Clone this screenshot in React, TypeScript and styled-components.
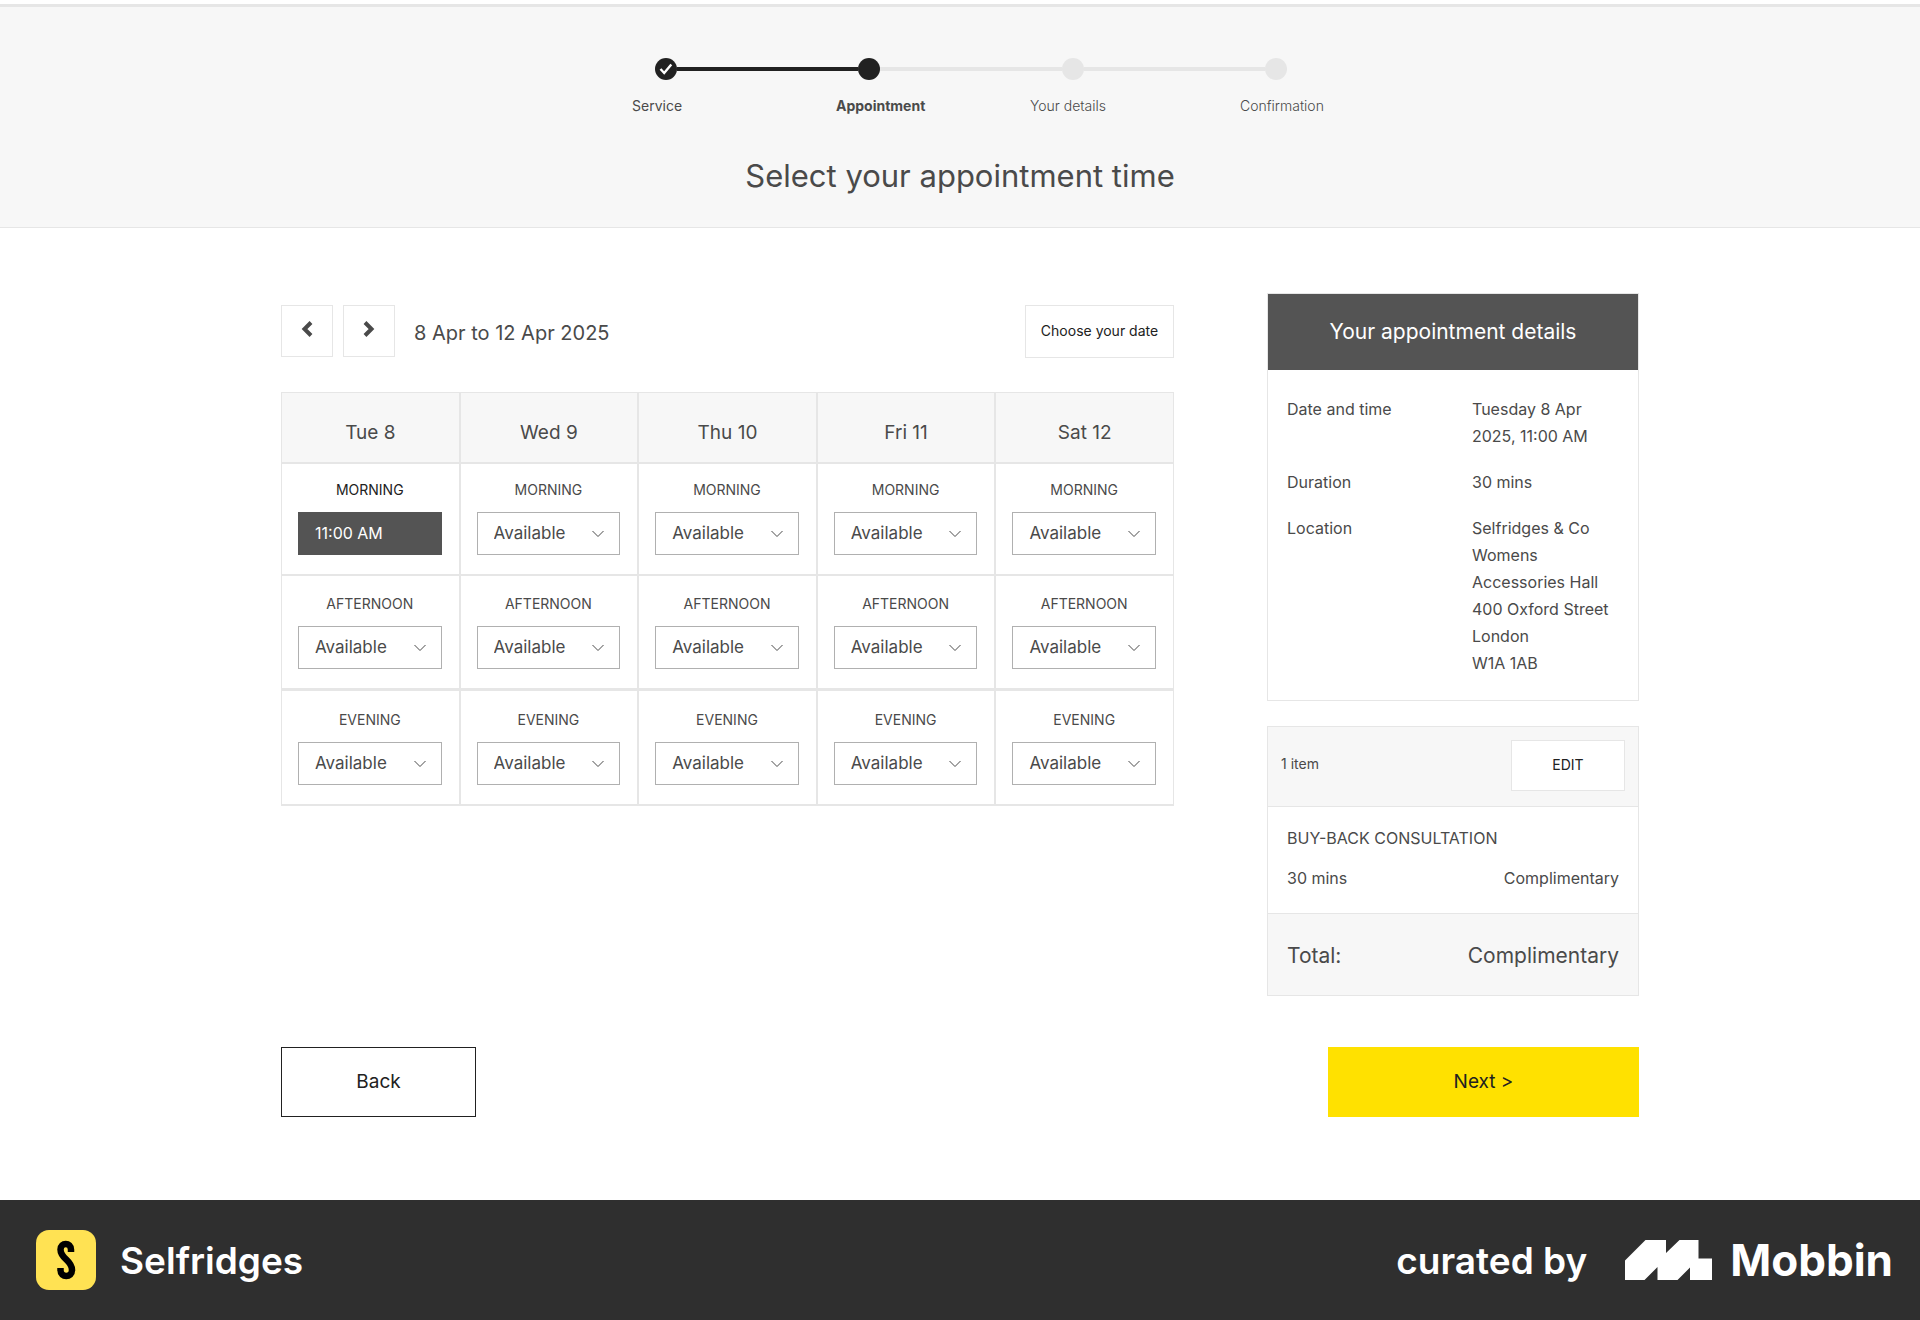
import React from "react";
import styled, { createGlobalStyle } from "styled-components";

const color = {
  ink: "#212121",
  text: "#4a4a4a",
  slate: "#545454",
  line: "#e6e6e6",
  panel: "#f7f7f7",
  control: "#b0b0b0",
  yellow: "#ffe100",
  footer: "#2f2f2f",
};

const GlobalStyle = createGlobalStyle`
  *, *::before, *::after { box-sizing: border-box; }
  body {
    margin: 0;
    background: #fff;
    color: ${color.text};
    font-family: Inter, "Liberation Sans", sans-serif;
    font-size: 16px;
  }
  h1, h2, p, ol, dl, dd { margin: 0; padding: 0; }
  button, select { font-family: inherit; border-radius: 0; cursor: pointer; }
`;

const Hero = styled.header`
  margin-top: 4px;
  padding: 51px 24px 31px;
  border-top: 3px solid ${color.line};
  border-bottom: 1px solid ${color.line};
  background: ${color.panel};
  display: flex;
  flex-direction: column;
  align-items: center;
`;

const Track = styled.div`
  width: 100%;
  max-width: 632px;
  margin-left: 22px;
  display: flex;
  align-items: center;
`;

const Dot = styled.span<{ $on: boolean }>`
  flex: none;
  width: 22px;
  height: 22px;
  border-radius: 50%;
  background: ${(p) => (p.$on ? color.ink : color.line)};
  display: grid;
  place-items: center;
`;

const Bar = styled.span<{ $on: boolean }>`
  flex: 1;
  height: 4px;
  background: ${(p) => (p.$on ? color.ink : color.line)};
`;

const Steps = styled.ol`
  width: 100%;
  max-width: 694px;
  margin-top: 15px;
  margin-left: 38px;
  list-style: none;
  display: grid;
  grid-template-columns: 204fr 194fr 210fr 86fr;
`;

const Step = styled.li<{ $weight: number }>`
  font-size: 14px;
  line-height: 22px;
  font-weight: ${(p) => p.$weight};
  white-space: nowrap;
`;

const Title = styled.h1`
  margin-top: 39px;
  font-size: 31px;
  line-height: 40px;
  font-weight: 400;
  text-align: center;
`;

const Main = styled.main`
  width: 100%;
  max-width: 1358px;
  margin: 0 auto;
  padding: 65px 0 83px;
`;

const Columns = styled.div`
  display: grid;
  grid-template-columns: minmax(0, 1fr) 372px;
  column-gap: 93px;
  align-items: start;
`;

const Toolbar = styled.div`
  margin: 12px 0 31px;
  display: flex;
  align-items: flex-start;
  gap: 10px;
`;

const OutlineButton = styled.button<{ $w: number; $h: number }>`
  width: ${(p) => p.$w}px;
  height: ${(p) => p.$h}px;
  padding: 0 0 2px;
  border: 1px solid ${color.line};
  background: #fff;
  color: ${color.ink};
  font-size: 14px;
  display: inline-flex;
  align-items: center;
  justify-content: center;
`;

const ArrowButton = styled(OutlineButton)`
  padding-bottom: 4px;
`;

const Range = styled.h2`
  margin-left: 9px;
  margin-right: auto;
  font-size: 20px;
  line-height: 56px;
  font-weight: 400;
`;

const Calendar = styled.table`
  width: 100%;
  table-layout: fixed;
  border-collapse: separate;
  border-spacing: 0;
`;

const Day = styled.th`
  height: 71px;
  padding: 10px 0 0;
  border: 1px solid ${color.line};
  background: ${color.panel};
  font-size: 19px;
  font-weight: 400;
`;

const Slot = styled.td<{ $top: number; $edge: number }>`
  padding: ${(p) => p.$top}px 17px 19px 16px;
  border: 1px solid ${color.line};
  border-top-width: ${(p) => p.$edge}px;
  border-bottom-width: ${(p) => p.$edge}px;
`;

const SlotLabel = styled.label<{ $strong: boolean }>`
  display: block;
  margin-bottom: 12px;
  color: ${(p) => (p.$strong ? color.ink : color.text)};
  font-size: 14px;
  line-height: 20px;
  text-align: center;
  text-transform: uppercase;
`;

const Picker = styled.div`
  display: grid;
  align-items: center;

  > * { grid-area: 1 / 1; }
  > svg {
    justify-self: end;
    margin-right: 16px;
    pointer-events: none;
  }
`;

const TimeSelect = styled.select<{ $chosen: boolean }>`
  appearance: none;
  width: 100%;
  height: 43px;
  padding: 0 16px 2px;
  border: 1px solid ${(p) => (p.$chosen ? color.slate : color.control)};
  background: ${(p) => (p.$chosen ? color.slate : "#fff")};
  color: ${(p) => (p.$chosen ? "#fff" : color.text)};
  font-size: ${(p) => (p.$chosen ? 16 : 17)}px;
`;

const Card = styled.section`
  border: 1px solid ${color.line};

  & + & { margin-top: 25px; }
`;

const CardTitle = styled.h2`
  height: 76px;
  padding-bottom: 2px;
  display: grid;
  place-items: center;
  background: ${color.slate};
  color: #fff;
  font-size: 21px;
  font-weight: 400;
`;

const Details = styled.dl`
  padding: 26px 19px 23px;
  display: grid;
  grid-template-columns: 185px minmax(0, 1fr);
  row-gap: 19px;
  line-height: 27px;
`;

const Line = styled.span`
  display: block;
`;

const CardHead = styled.div`
  height: 80px;
  padding: 0 13px 3px;
  display: flex;
  align-items: center;
  justify-content: space-between;
  background: ${color.panel};
  border-bottom: 1px solid ${color.line};
  font-size: 14px;
`;

const ItemCount = styled.span`
  padding-bottom: 4px;
`;

const Item = styled.div`
  padding: 18px 19px 14px;
  border-bottom: 1px solid ${color.line};
  line-height: 27px;
`;

const Split = styled.div`
  display: flex;
  justify-content: space-between;
  padding: 13px 0 7px;
`;

const Total = styled.div`
  height: 81px;
  padding: 2px 19px 0;
  display: flex;
  align-items: center;
  justify-content: space-between;
  background: ${color.panel};
  font-size: 21px;
`;

const Actions = styled.div`
  margin-top: 51px;
  display: flex;
  justify-content: space-between;
`;

const Action = styled.button<{ $primary?: boolean }>`
  width: ${(p) => (p.$primary ? 311 : 195)}px;
  height: 70px;
  padding: 0 0 2px;
  border: ${(p) => (p.$primary ? "0" : `1px solid ${color.ink}`)};
  background: ${(p) => (p.$primary ? color.yellow : "#fff")};
  color: ${color.ink};
  font-size: 19px;
`;

const Footer = styled.footer`
  height: 120px;
  padding: 0 27px 0 36px;
  display: flex;
  align-items: center;
  background: ${color.footer};
  color: #fff;
  font-size: 37px;
  font-weight: 600;
`;

const AppName = styled.span`
  margin-left: 24px;
  margin-right: auto;
`;

const Brand = styled.span`
  margin-left: 18px;
  font-size: 44px;
  font-weight: 700;
`;

const MobbinMark = styled.svg`
  margin-left: 38px;
`;

const steps = [
  { label: "Service", weight: 400 },
  { label: "Appointment", weight: 700 },
  { label: "Your details", weight: 300 },
  { label: "Confirmation", weight: 300 },
];

const days = ["Tue 8", "Wed 9", "Thu 10", "Fri 11", "Sat 12"];

const periods = [
  { name: "Morning", top: 16, edge: 1 },
  { name: "Afternoon", top: 18, edge: 1 },
  { name: "Evening", top: 19, edge: 2 },
];

const details = [
  { term: "Date and time", lines: ["Tuesday 8 Apr", "2025, 11:00 AM"] },
  { term: "Duration", lines: ["30 mins"] },
  {
    term: "Location",
    lines: ["Selfridges & Co", "Womens", "Accessories Hall", "400 Oxford Street", "London", "W1A 1AB"],
  },
];

function Arrow({ next }: { next?: boolean }) {
  return (
    <svg width="12" height="18" viewBox="0 0 12 18" fill="none" stroke={color.text} strokeWidth="4" aria-hidden="true">
      <path d={next ? "M2 2.5 8.5 9 2 15.5" : "M10 2.5 3.5 9 10 15.5"} />
    </svg>
  );
}

function TimeSlot({ day, period, chosen }: { day: string; period: string; chosen: boolean }) {
  const id = `${period}-${day}`.toLowerCase().replace(" ", "-");
  return (
    <>
      <SlotLabel htmlFor={id} $strong={chosen}>
        {period}
      </SlotLabel>
      <Picker>
        <TimeSelect id={id} $chosen={chosen}>
          <option>{chosen ? "11:00 AM" : "Available"}</option>
        </TimeSelect>
        {!chosen && (
          <svg width="12" height="8" viewBox="0 0 12 8" fill="none" stroke={color.text} aria-hidden="true">
            <path d="M.5 1 6 6.5 11.5 1" />
          </svg>
        )}
      </Picker>
    </>
  );
}

export default function App() {
  return (
    <>
      <GlobalStyle />
      <Hero>
        <Track aria-hidden="true">
          <Dot $on>
            <svg width="14" height="12" viewBox="0 0 14 12" fill="none" stroke="#fff" strokeWidth="2.4">
              <path d="m1.5 6 3.7 4L12.3 1.5" />
            </svg>
          </Dot>
          <Bar $on />
          <Dot $on />
          <Bar $on={false} />
          <Dot $on={false} />
          <Bar $on={false} />
          <Dot $on={false} />
        </Track>
        <Steps>
          {steps.map((s) => (
            <Step key={s.label} $weight={s.weight}>
              {s.label}
            </Step>
          ))}
        </Steps>
        <Title>Select your appointment time</Title>
      </Hero>

      <Main>
        <Columns>
          <div>
            <Toolbar>
              <ArrowButton $w={52} $h={52} aria-label="Previous dates">
                <Arrow />
              </ArrowButton>
              <ArrowButton $w={52} $h={52} aria-label="Next dates">
                <Arrow next />
              </ArrowButton>
              <Range>8 Apr to 12 Apr 2025</Range>
              <OutlineButton $w={149} $h={53}>
                Choose your date
              </OutlineButton>
            </Toolbar>
            <Calendar>
              <thead>
                <tr>
                  {days.map((d) => (
                    <Day key={d} scope="col">
                      {d}
                    </Day>
                  ))}
                </tr>
              </thead>
              <tbody>
                {periods.map((p, row) => (
                  <tr key={p.name}>
                    {days.map((d, col) => (
                      <Slot key={d} $top={p.top} $edge={p.edge}>
                        <TimeSlot day={d} period={p.name} chosen={row === 0 && col === 0} />
                      </Slot>
                    ))}
                  </tr>
                ))}
              </tbody>
            </Calendar>
          </div>

          <aside>
            <Card>
              <CardTitle>Your appointment details</CardTitle>
              <Details>
                {details.map((d) => (
                  <React.Fragment key={d.term}>
                    <dt>{d.term}</dt>
                    <dd>
                      {d.lines.map((l) => (
                        <Line key={l}>{l}</Line>
                      ))}
                    </dd>
                  </React.Fragment>
                ))}
              </Details>
            </Card>
            <Card>
              <CardHead>
                <ItemCount>1 item</ItemCount>
                <OutlineButton $w={114} $h={51}>
                  EDIT
                </OutlineButton>
              </CardHead>
              <Item>
                <p>BUY-BACK CONSULTATION</p>
                <Split>
                  <span>30 mins</span>
                  <span>Complimentary</span>
                </Split>
              </Item>
              <Total>
                <span>Total:</span>
                <span>Complimentary</span>
              </Total>
            </Card>
          </aside>
        </Columns>

        <Actions>
          <Action>Back</Action>
          <Action $primary>Next &gt;</Action>
        </Actions>
      </Main>

      <Footer>
        <svg width="60" height="60" viewBox="0 0 60 60" fill="none" aria-hidden="true">
          <rect width="60" height="60" rx="13" fill="#ffe253" />
          <path
            d="M35 22v-2.500c0-7.500-10.500-7.500-10.500 0C24.500 29 36 30 36 40c0 8-11.500 8-11.500 0v-2"
            stroke="#000"
            strokeWidth="6.500"
          />
        </svg>
        <AppName>Selfridges</AppName>
        <span>curated by</span>
        <MobbinMark width="87" height="40" viewBox="0 0 87 40" fill="#fff" aria-hidden="true">
          <path d="M0 20.500 20.500 0H41v13L54.500 0h19v18.500H87V40H65V27.500L52.500 40h-20V27L19.500 40H0Z" />
        </MobbinMark>
        <Brand>Mobbin</Brand>
      </Footer>
    </>
  );
}
